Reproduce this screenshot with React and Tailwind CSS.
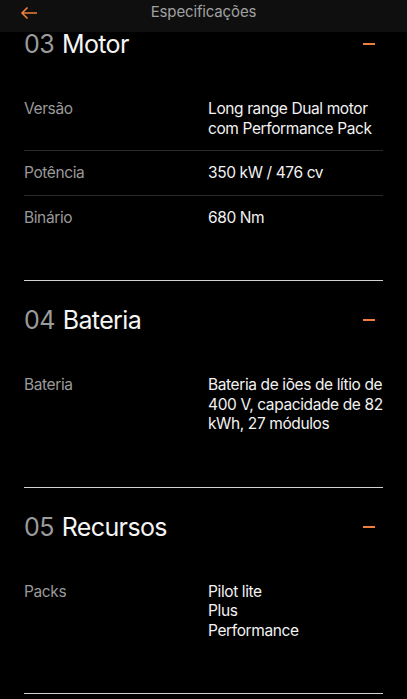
const sections = [
  {
    num: "03",
    title: "Motor",
    rows: [
      { label: "Versão", value: ["Long range Dual motor", "com Performance Pack"] },
      { label: "Potência", value: ["350 kW / 476 cv"] },
      { label: "Binário", value: ["680 Nm"] },
    ],
  },
  {
    num: "04",
    title: "Bateria",
    rows: [
      {
        label: "Bateria",
        value: ["Bateria de iões de lítio de", "400 V, capacidade de 82", "kWh, 27 módulos"],
      },
    ],
  },
  {
    num: "05",
    title: "Recursos",
    rows: [{ label: "Packs", value: ["Pilot lite", "Plus", "Performance"] }],
  },
];

const Section = ({ section, first, last }) => {
  return (
    <div
      className={`mx-6 ${first ? "-mt-px" : "border-t border-[#d2d2d2] pt-[26px]"} ${
        last ? "border-b border-[#2c2c2c]" : ""
      } pb-[41px]`}
    >
      <div className="flex h-[26px] items-center justify-between">
        <div className="flex items-baseline gap-[8px] text-[25px] leading-[26px] tracking-[-0.025em]">
          <span className="text-[#9b9b9b]">{section.num}</span>
          <span className="text-[#f5f5f5]">{section.title}</span>
        </div>
        <div className="mr-[8px] h-[2px] w-[12px] bg-[#ef7f3c]" />
      </div>
      <div className="mt-[30px]">
        {section.rows.map((row, i) => (
          <div
            key={row.label}
            className={`flex py-[12px] text-[15.5px] leading-[19.5px] tracking-[-0.025em] ${
              i < section.rows.length - 1 ? "border-b border-[#2a2a2a]" : ""
            }`}
          >
            <div className="w-[184px] text-[#9a9a9a]">{row.label}</div>
            <div className="flex-1 text-[#f2f2f2]">
              {row.value.map((line) => (
                <div key={line}>{line}</div>
              ))}
            </div>
          </div>
        ))}
      </div>
    </div>
  );
};

const App = () => {
  return (
    <div className="min-h-screen bg-black font-['Inter',sans-serif] overflow-hidden">
      <div className="relative flex h-[32px] items-center justify-center bg-[#0f0f0f]">
        <svg
          className="absolute left-[20px] top-[6px]"
          width="18"
          height="14"
          viewBox="0 0 18 14"
          fill="none"
          stroke="#ef7f3c"
          strokeWidth="1.6"
        >
          <path d="M17 7H2M7.5 1.5 2 7l5.5 5.5" />
        </svg>
        <span className="-mt-[8px] text-[15px] tracking-[-0.01em] text-[#a0a0a0]">Especificações</span>
      </div>
      {sections.map((s, i) => (
        <Section key={s.num} section={s} first={i === 0} last={i === sections.length - 1} />
      ))}
    </div>
  );
};

export default App;
